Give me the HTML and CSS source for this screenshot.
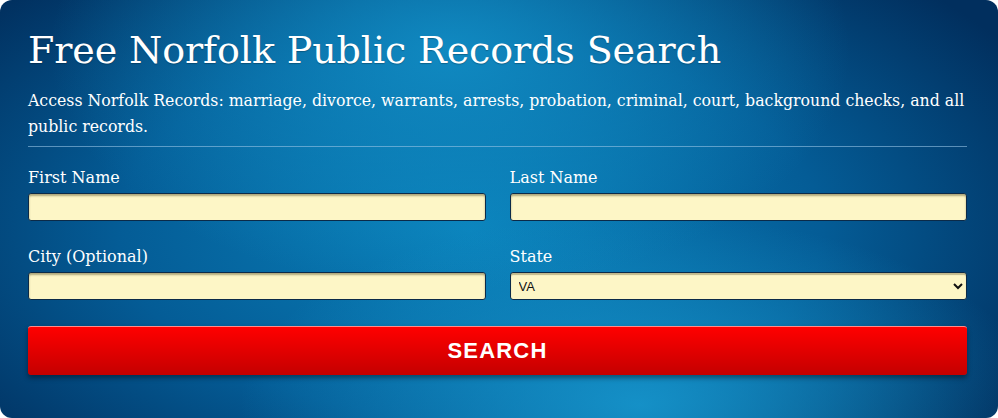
FILE: index.html
```html
<!DOCTYPE html>
<html>
<head>
<meta charset="utf-8">
<link rel="stylesheet" href="styles.css">
</head>
<body>
<div class="panel">
  <h1 class="title">Free Norfolk Public Records Search</h1>
  <p class="intro">Access Norfolk Records: marriage, divorce, warrants, arrests, probation, criminal, court, background checks, and all public records.</p>
  <form class="form">
    <div class="grid">
      <label class="field">
        <span class="label">First Name</span>
        <input class="input" type="text">
      </label>
      <label class="field">
        <span class="label">Last Name</span>
        <input class="input" type="text">
      </label>
      <label class="field">
        <span class="label">City (Optional)</span>
        <input class="input" type="text">
      </label>
      <label class="field">
        <span class="label">State</span>
        <select class="input select"><option>VA</option></select>
      </label>
    </div>
    <button class="btn" type="button">SEARCH</button>
  </form>
</div>
</body>
</html>
```
FILE: styles.css
```css
html, body {
  margin: 0;
  padding: 0;
  background: #ffffff;
}
.panel {
  width: 998px;
  height: 418px;
  box-sizing: border-box;
  padding: 25px 31px 0 28px;
  border-radius: 12px;
  background:
    radial-gradient(ellipse 400px 240px at 450px 50px, rgba(18,145,200,0.85), rgba(18,145,200,0) 100%),
    radial-gradient(ellipse 400px 190px at 640px 405px, rgba(25,158,212,0.8), rgba(25,158,212,0) 100%),
    radial-gradient(ellipse 640px 340px at 470px 230px, #0a82bb 0%, #045c96 55%, #012f5e 100%);
  font-family: "DejaVu Serif", "Liberation Serif", serif;
  color: #ffffff;
  overflow: hidden;
}
.title {
  margin: 0;
  font-weight: normal;
  font-size: 38px;
  line-height: 50px;
  letter-spacing: -0.1px;
  text-shadow: 0 1px 1px rgba(0,0,0,0.25);
}
.intro {
  margin: 13px 0 0;
  font-size: 15.75px;
  line-height: 26px;
  padding-bottom: 6px;
  border-bottom: 1px solid rgba(150,195,228,0.6);
}
.form {
  margin-top: 21px;
}
.grid {
  display: grid;
  grid-template-columns: 1fr 1fr;
  column-gap: 24px;
  row-gap: 26px;
}
.field {
  display: flex;
  flex-direction: column;
  gap: 5px;
}
.label {
  font-size: 16px;
  line-height: 20px;
}
.input {
  box-sizing: border-box;
  height: 28px;
  width: 100%;
  margin: 0;
  border: 1px solid #0b2a48;
  border-radius: 3px;
  background: #fdf6c6;
  box-shadow: inset 0 2px 2px rgba(80,70,30,0.45);
  font-family: "Liberation Sans", Arial, sans-serif;
  font-size: 13px;
  color: #111;
  padding: 0 4px;
}
.select {
  box-shadow: inset 0 2px 1px rgba(80,70,30,0.35);
}
.btn {
  display: block;
  width: 100%;
  height: 49px;
  margin-top: 26px;
  border: none;
  border-top: 1px solid #ff8a8a;
  border-radius: 3px;
  background: linear-gradient(#ff0000, #c40000);
  color: #fff;
  font-family: "Liberation Sans", Arial, sans-serif;
  font-weight: bold;
  font-size: 22px;
  letter-spacing: 1.2px;
  box-shadow: 0 3px 5px rgba(0,0,0,0.4);
}
```
